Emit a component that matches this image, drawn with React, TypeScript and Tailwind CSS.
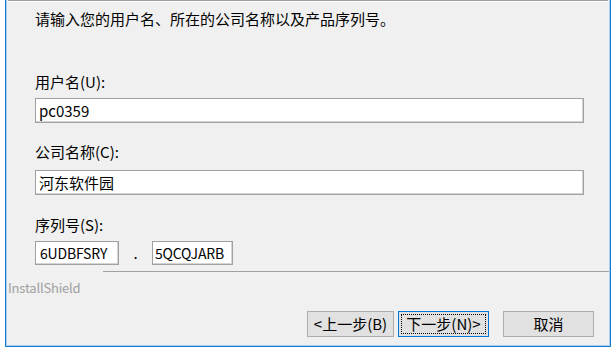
import React from "react";

const font = "font-['Noto_Sans_CJK_SC','Noto_Sans',sans-serif]";

function Field({ text }: { text: string }) {
  return (
    <div className="h-[25px] w-[549px] border border-[#a0a0a0] bg-white shadow-[inset_-1px_-1px_0_#d4d4d4] pl-[3px] text-[15px] leading-[23px] text-black">
      {text}
    </div>
  );
}

function Btn({ children, w, focused }: { children: React.ReactNode; w: string; focused?: boolean }) {
  return (
    <div
      className={`relative h-[26px] ${w} flex items-center justify-center bg-[#e1e1e1] border ${
        focused ? "border-[#0078d7]" : "border-[#adadad]"
      } text-[15px] leading-[20px] text-black`}
    >
      {focused && <span className="absolute inset-[2px] border border-dotted border-black" />}
      <span className="relative">{children}</span>
    </div>
  );
}

export default function App() {
  return (
    <div className={`w-[613px] h-[351px] bg-white overflow-hidden ${font}`}>
      <div className="ml-[5px] w-[606px] h-[347px] border-l border-r border-b border-[#1a78cf] bg-[#f0f0f0]">
        <div className="h-full border-l border-r border-b border-[#a9d0f2] flex flex-col">
          <div className="mx-[1px] h-[1px] bg-[#a0a0a0]" />
          <div className="mx-[1px] h-[1px] bg-[#ffffff]" />
          <div className="pl-[28px] flex flex-col">
            <div className="mt-[7px] h-[20px] text-[15px] leading-[20px] text-black">
              请输入您的用户名、所在的公司名称以及产品序列号。
            </div>
            <div className="mt-[43px] h-[20px] text-[15px] leading-[20px] text-black">用户名(U):</div>
            <div className="mt-[6px]">
              <Field text="pc0359" />
            </div>
            <div className="mt-[19px] h-[20px] text-[15px] leading-[20px] text-black">公司名称(C):</div>
            <div className="mt-[8px]">
              <Field text="河东软件园" />
            </div>
            <div className="mt-[20px] h-[20px] text-[15px] leading-[20px] text-black">序列号(S):</div>
            <div className="mt-[6px] flex items-center h-[24px]">
              <div className="h-[24px] w-[84px] border border-[#a0a0a0] bg-white shadow-[inset_-1px_-1px_0_#d4d4d4] pl-[4px] text-[14px] tracking-[-0.2px] leading-[22px] text-black">
                6UDBFSRY
              </div>
              <div className="w-[33px] text-center text-[15px] leading-[24px] text-black">.</div>
              <div className="h-[24px] w-[81px] border border-[#a0a0a0] bg-white shadow-[inset_-1px_-1px_0_#d4d4d4] pl-[2px] text-[14px] tracking-[-0.2px] leading-[22px] text-black">
                5QCQJARB
              </div>
            </div>
          </div>
          <div className="mt-[6px] ml-[96px] h-[1px] bg-[#a0a0a0]" />
          <div className="mt-[7px] ml-[1px] h-[18px] text-[13px] tracking-[-0.2px] leading-[18px] text-[#a0a0a0]">InstallShield</div>
          <div className="mt-[14px] flex justify-end pr-[15px]">
            <Btn w="w-[87px]">&lt;上一步(B)</Btn>
            <div className="w-[4px]" />
            <Btn w="w-[91px]" focused>
              下一步(N)&gt;
            </Btn>
            <div className="w-[14px]" />
            <Btn w="w-[91px]">取消</Btn>
          </div>
        </div>
      </div>
    </div>
  );
}
